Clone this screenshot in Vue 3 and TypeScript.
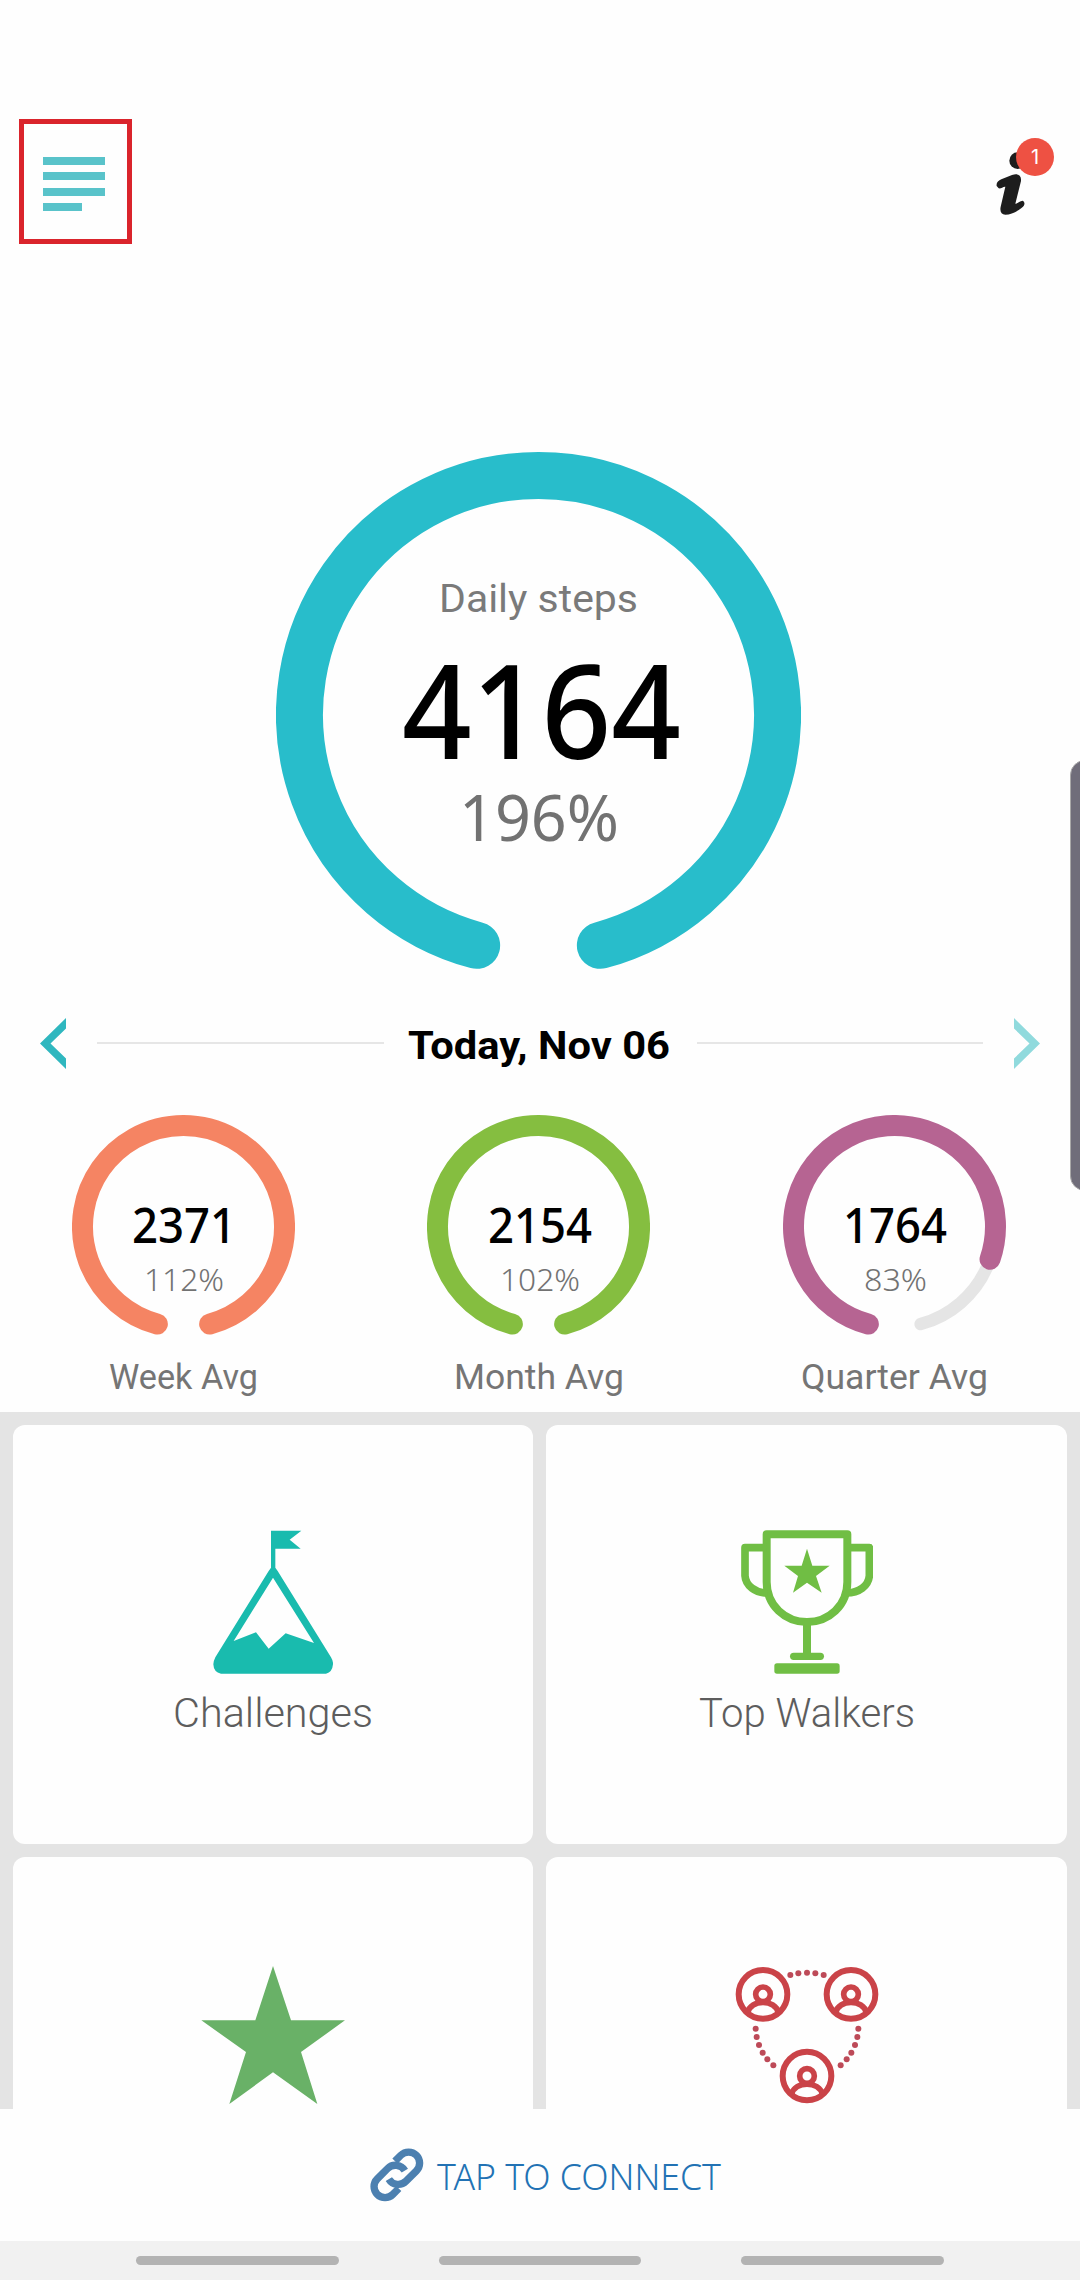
<script setup lang="ts">
import { h } from 'vue'

interface FitProps {
  text: string
  size: number
  cap: number
  width: number
}

/* One line of text set to a fixed measure; its box is the cap height. */
const FitText = (p: FitProps) =>
  h('svg', { class: 'fit', width: p.width, height: p.cap }, [
    h(
      'text',
      {
        x: 0,
        y: p.cap,
        'font-size': p.size,
        textLength: p.width,
        lengthAdjust: 'spacingAndGlyphs',
        fill: 'currentColor',
      },
      p.text,
    ),
  ])
FitText.props = ['text', 'size', 'cap', 'width']

const START = 195
const SWEEP = 330

function arc(c: number, r: number, share: number): string {
  const at = (deg: number) => {
    const a = (deg * Math.PI) / 180
    return `${(c + r * Math.sin(a)).toFixed(2)} ${(c - r * Math.cos(a)).toFixed(2)}`
  }
  const sweep = SWEEP * Math.min(share, 1)
  return `M${at(START)}A${r} ${r} 0 ${sweep > 180 ? 1 : 0} 1 ${at(START + sweep)}`
}

const averages = [
  { label: 'Week Avg', labelW: 149, steps: '2371', stepsW: 104, pct: '112%', pctW: 80, share: 1.12, color: '#f58463' },
  { label: 'Month Avg', labelW: 170, steps: '2154', stepsW: 104, pct: '102%', pctW: 80, share: 1.02, color: '#85be40' },
  { label: 'Quarter Avg', labelW: 187, steps: '1764', stepsW: 104, pct: '83%', pctW: 63, share: 0.83, color: '#b66492' },
]

const people = [
  [187, 191],
  [451, 191],
  [319, 436],
]
const dots = [
  [269, 133], [293, 128], [319, 126], [344, 128], [369, 133],
  [165, 294], [168, 319], [175, 343], [186, 366], [200, 386], [218, 404],
  [473, 294], [470, 319], [463, 343], [452, 366], [438, 386], [420, 404],
]
</script>

<template>
  <div class="screen">
    <header class="top">
      <div class="menu">
        <i></i><i></i><i></i><i class="short"></i>
      </div>
      <div class="info">
        <svg width="66" height="84" viewBox="150 105 198 252">
          <circle cx="233" cy="182" r="25" fill="#1d1d1d" />
          <path
            fill="#1d1d1d"
            d="M170 258C168 248 175 242 184 238L216 225C234 219 245 226 243 243L226 311C234 311 239 302 248 302C255 305 255 314 249 320C236 332 215 344 196 344C184 343 179 334 182 320L196 260C189 259 183 267 176 265Z"
          />
        </svg>
        <span class="badge">1</span>
      </div>
    </header>

    <section class="daily">
      <svg class="ring" width="525" height="525">
        <path :d="arc(262.5, 239, 1)" stroke="#28bdcb" stroke-width="47" />
      </svg>
      <div class="daily-text">
        <FitText class="cap" text="Daily steps" :size="39" :cap="28" :width="199" />
        <FitText class="big" text="4164" :size="131" :cap="94" :width="279" />
        <FitText class="pct" text="196%" :size="63" :cap="45" :width="160" />
      </div>
    </section>

    <nav class="date">
      <svg width="26" height="51" viewBox="0 0 26 51"><path fill="#2fb7bf" d="M26 0V10.5L10.5 25.5L26 40.5V51L0 25.5Z" /></svg>
      <hr />
      <FitText class="day" text="Today, Nov 06" :size="39.5" :cap="28" :width="262" />
      <hr />
      <svg width="26" height="51" viewBox="0 0 26 51"><path fill="#90dadd" d="M0 0V10.5L15.5 25.5L0 40.5V51L26 25.5Z" /></svg>
    </nav>

    <section class="averages">
      <div v-for="a in averages" :key="a.label" class="avg">
        <div class="dial">
          <svg class="ring" width="223" height="223">
            <path v-if="a.share < 1" :d="arc(111.5, 101, 1)" stroke="#e5e5e5" stroke-width="12.5" />
            <path :d="arc(111.5, 101, a.share)" :stroke="a.color" stroke-width="21" />
          </svg>
          <div class="dial-text">
            <FitText class="num" :text="a.steps" :size="48.5" :cap="34.5" :width="a.stepsW" />
            <FitText class="sub" :text="a.pct" :size="31.5" :cap="22.5" :width="a.pctW" />
          </div>
        </div>
        <FitText class="lbl" :text="a.label" :size="34.5" :cap="24.5" :width="a.labelW" />
      </div>
    </section>

    <main class="tiles">
      <div class="tile">
        <svg width="120" height="144" viewBox="161 91 360 432">
          <path
            fill="#19bbae"
            fill-rule="evenodd"
            d="M335 93H426L391 120L424 147H348V204L355 214L515 473Q522 485 521 494Q519 518 500 522H185Q163 518 162 494Q162 485 168 473L328 214L335 204ZM341 234L223 424L290 398L328 447L379 401L464 430Z"
          />
        </svg>
        <FitText class="name" text="Challenges" :size="40" :cap="29" :width="200" />
      </div>
      <div class="tile">
        <svg width="132" height="144" viewBox="242 91 396 432" fill="none" stroke="#70be44">
          <path stroke-width="24" stroke-linejoin="round" d="M319 104H561V247C561 318 505 367 440 367S319 318 319 247Z" />
          <path stroke-width="23" stroke-linejoin="round" d="M319 144H254V228C256 258 285 280 322 280M561 144H627V228C625 258 596 280 558 280" />
          <path stroke-width="24" d="M440 370V468" />
          <path stroke-width="22" stroke-linecap="round" d="M400 470H480" />
          <rect x="342" y="491" width="196" height="31" rx="8" fill="#70be44" stroke="none" />
          <path fill="#70be44" stroke="none" d="M440 147L456 198H508L467 229L484 279L440 249L398 279L413 229L372 198H424Z" />
        </svg>
        <FitText class="name" text="Top Walkers" :size="40" :cap="29" :width="216" />
      </div>
      <div class="tile low">
        <svg width="144" height="138" viewBox="122 376 432 414">
          <path fill="#69b167" d="M338 376L392 539H554L422 634L471 790L338 695L207 790L257 634L123 539H285Z" />
        </svg>
      </div>
      <div class="tile low">
        <svg width="144" height="138" viewBox="103 106 432 414" fill="none" stroke="#ca4348">
          <g v-for="(p, i) in people" :key="i" :transform="`translate(${p[0]} ${p[1]})`">
            <circle r="73" stroke-width="18" />
            <circle r="22" stroke-width="17" />
            <path stroke-width="17" d="M-46 55C-38 14 38 14 46 55" />
          </g>
          <circle v-for="(d, i) in dots" :key="'d' + i" :cx="d[0]" :cy="d[1]" r="9" fill="#bd4a58" stroke="none" />
        </svg>
      </div>
    </main>

    <footer class="connect">
      <svg width="54" height="54" viewBox="92 116 162 162">
        <g transform="translate(172.5 196.5) rotate(-45)" fill="none" stroke="#4c80b0" stroke-width="22">
          <path d="M25 -33H50A33 33 0 0 1 50 33H6A33 33 0 0 1 -26 -8" />
          <path d="M-25 33H-50A33 33 0 0 1 -50 -33H-6A33 33 0 0 1 26 8" />
        </g>
      </svg>
      <FitText class="tap" text="TAP TO CONNECT" :size="37" :cap="26" :width="284" />
    </footer>
    <div class="softkeys"><b></b><b></b><b></b></div>

    <div class="edge"></div>
  </div>
</template>

<style>
body {
  background: #fefefe;
}
</style>

<style scoped>
.screen {
  position: relative;
  width: 1080px;
  height: 2280px;
  overflow: hidden;
  display: flex;
  flex-direction: column;
  background: #fefefe;
  font-family: Roboto, 'Liberation Sans', sans-serif;
  color: #727272;
}
svg {
  display: block;
  flex: none;
}
.fit {
  overflow: visible;
}
.top {
  box-sizing: border-box;
  height: 452px;
  flex: none;
  padding: 119px 24px 0 19px;
  display: flex;
  justify-content: space-between;
  align-items: flex-start;
}
.menu {
  box-sizing: border-box;
  width: 113px;
  height: 125px;
  border: 5px solid #da242c;
  padding: 33px 0 0 19px;
  display: flex;
  flex-direction: column;
  gap: 7.4px;
}
.menu i {
  width: 62px;
  height: 8px;
  background: #59c3ca;
}
.menu i.short {
  width: 38.5px;
}
.info {
  position: relative;
  margin-top: 16px;
  width: 66px;
}
.badge {
  position: absolute;
  left: 26px;
  top: 3px;
  width: 38px;
  height: 38px;
  border-radius: 50%;
  background: #ee5143;
  color: #fff;
  font: 400 20px/38px Inter, sans-serif;
  text-align: center;
}
.ring {
  grid-area: 1 / 1;
  fill: none;
  stroke-linecap: round;
}
.daily {
  flex: none;
  display: grid;
  justify-content: center;
  padding-right: 3px;
}
.daily-text,
.dial-text {
  grid-area: 1 / 1;
  display: flex;
  flex-direction: column;
  align-items: center;
}
.cap {
  margin-top: 132px;
  color: #7a7a7a;
}
.big {
  margin-top: 53px;
  margin-left: 5px;
  font-family: 'Noto Sans', sans-serif;
  font-weight: 500;
  color: #000;
}
.pct {
  margin-top: 37px;
  margin-left: 1px;
  font-family: 'Noto Sans', sans-serif;
  font-weight: 400;
}
.date {
  flex: none;
  margin-top: 40.5px;
  height: 51px;
  padding: 0 40px;
  display: flex;
  align-items: center;
}
.date hr {
  flex: 1;
  height: 2.5px;
  margin: 0 25px 0 31px;
  border: 0;
  background: #e6e6e6;
}
.day + hr {
  margin: 0 31px 0 26px !important;
}
.day {
  font-weight: 700;
  color: #000;
  position: relative;
  top: 1.5px;
  left: -1px;
}
.averages {
  flex: none;
  padding: 46px 0 0 71.5px;
  height: 297.5px;
  display: flex;
  gap: 132.5px;
}
.avg {
  display: flex;
  flex-direction: column;
  align-items: center;
  width: 223px;
}
.dial {
  display: grid;
  margin-bottom: 26.5px;
}
.num {
  margin-top: 93.5px;
  margin-left: 2px;
  font-family: 'Noto Sans', sans-serif;
  font-weight: 500;
  color: #000;
}
.sub {
  margin-top: 25.5px;
  margin-left: 2px;
  font-family: 'Noto Sans', sans-serif;
  font-weight: 300;
}
.lbl {
  color: #757575;
}
.tiles {
  flex: none;
  box-sizing: border-box;
  height: 697px;
  overflow: hidden;
  padding: 13px;
  background: #e4e4e4;
  display: grid;
  grid-template-columns: 520px 521px;
  grid-auto-rows: 419px;
  gap: 13px;
}
.tile {
  background: #fefefe;
  border-radius: 12px;
  padding-top: 105px;
  box-sizing: border-box;
  display: flex;
  flex-direction: column;
  align-items: center;
}
.tile.low {
  padding-top: 108.5px;
}
.name {
  margin-top: 24px;
  font-weight: 300;
  color: #5d5d5d;
}
.connect {
  flex: none;
  position: relative;
  height: 132px;
  background: #fefefe;
  display: flex;
  align-items: center;
  justify-content: center;
  gap: 13px;
  padding-left: 10px;
  box-sizing: border-box;
}
.tap {
  font-family: 'Noto Sans', sans-serif;
  font-weight: 350;
  color: #2272b4;
  margin-top: 4px;
}
.softkeys {
  flex: none;
  height: 39px;
  background: #f1f1f1;
  display: flex;
  justify-content: center;
  align-items: center;
  gap: 100px;
}
.softkeys b {
  width: 202.5px;
  height: 9.5px;
  border-radius: 5px;
  background: #b3b3b3;
}
.edge {
  position: absolute;
  right: -20px;
  top: 760px;
  width: 30px;
  height: 431px;
  box-sizing: border-box;
  border: 1px solid #a9a8a8;
  border-radius: 15px;
  background: #706d7a;
}
</style>
